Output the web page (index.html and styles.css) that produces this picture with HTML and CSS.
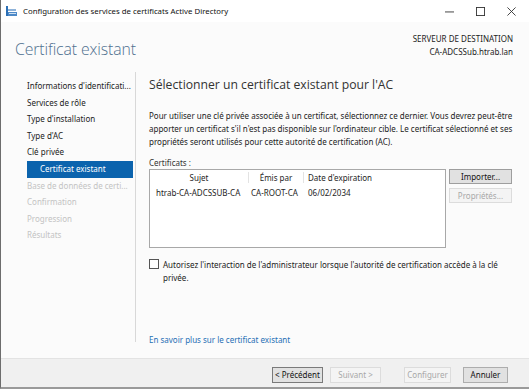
FILE: index.html
```html
<!DOCTYPE html>
<html lang="fr">
<head>
<meta charset="utf-8">
<link rel="stylesheet" href="styles.css">
</head>
<body>
<div class="window">
  <div class="titlebar">
    <svg class="appicon" width="11" height="11" viewBox="0 0 11 11">
      <rect x="0" y="0" width="2" height="10" fill="#2b6fb5"/>
      <rect x="2" y="3" width="8" height="2" fill="#8fb3d9"/>
      <rect x="2" y="6" width="9" height="4" fill="#4d89c7"/>
      <rect x="3" y="7" width="7" height="1" fill="#cfe0f2"/>
    </svg>
    <span class="title">Configuration des services de certificats Active Directory</span>
    <div class="controls">
      <svg width="10" height="10" viewBox="0 0 10 10"><line x1="0" y1="5.5" x2="10" y2="5.5" stroke="#333" stroke-width="1"/></svg>
      <svg width="10" height="10" viewBox="0 0 10 10"><rect x="0.5" y="0.5" width="9" height="9" fill="none" stroke="#333" stroke-width="1"/></svg>
      <svg width="10" height="10" viewBox="0 0 10 10"><path d="M0.5 0.5 L9.5 9.5 M9.5 0.5 L0.5 9.5" stroke="#333" stroke-width="1"/></svg>
    </div>
  </div>
  <div class="header">
    <h1 class="pagetitle">Certificat existant</h1>
    <div class="dest">
      <div>SERVEUR DE DESTINATION</div>
      <div>CA-ADCSSub.htrab.lan</div>
    </div>
  </div>
  <div class="main">
    <nav class="nav">
      <div class="navitem">Informations d'identificati...</div>
      <div class="navitem">Services de rôle</div>
      <div class="navitem">Type d'installation</div>
      <div class="navitem">Type d'AC</div>
      <div class="navitem">Clé privée</div>
      <div class="navitem selected">Certificat existant</div>
      <div class="navitem disabled">Base de données de certi...</div>
      <div class="navitem disabled">Confirmation</div>
      <div class="navitem disabled">Progression</div>
      <div class="navitem disabled">Résultats</div>
    </nav>
    <section class="content">
      <h2 class="heading">Sélectionner un certificat existant pour l'AC</h2>
      <p class="desc">Pour utiliser une clé privée associée à un certificat, sélectionnez ce dernier. Vous devrez peut-être apporter un certificat s'il n'est pas disponible sur l'ordinateur cible. Le certificat sélectionné et ses propriétés seront utilisés pour cette autorité de certification (AC).</p>
      <div class="label">Certificats :</div>
      <div class="certrow">
        <div class="list">
          <div class="lhead">
            <div class="col c1">Sujet</div>
            <div class="col c2">Émis par</div>
            <div class="col c3">Date d'expiration</div>
          </div>
          <div class="lrow">
            <div class="col c1 l">htrab-CA-ADCSSUB-CA</div>
            <div class="col c2 l">CA-ROOT-CA</div>
            <div class="col c3 l">06/02/2034</div>
          </div>
        </div>
        <div class="sidebtns">
          <div class="btn focus">Importer...</div>
          <div class="btn off">Propriétés...</div>
        </div>
      </div>
      <div class="check">
        <span class="box"></span>
        <span class="checktext">Autorisez l'interaction de l'administrateur lorsque l'autorité de certification accède à la clé privée.</span>
      </div>
      <div class="spacer"></div>
      <a class="link">En savoir plus sur le certificat existant</a>
    </section>
  </div>
  <div class="footer">
    <div class="btn wide prim">&lt; Précédent</div>
    <div class="btn wide off">Suivant &gt;</div>
    <div class="btn wide off gapl">Configurer</div>
    <div class="btn wide cancel">Annuler</div>
  </div>
</div>
</body>
</html>
```
FILE: styles.css
```css
* { box-sizing: border-box; margin: 0; padding: 0; }
html, body { width: 529px; height: 390px; overflow: hidden; background: #fff; }
body { font-family: "Noto Sans", "Open Sans", sans-serif; font-size: 8px; color: #1e1e1e; }
.window { width: 529px; height: 389px; display: flex; flex-direction: column; border-left: 1px solid #6d6d6d; border-bottom: 2px solid #9a9a9a; background: #fbfbfb; }
.titlebar { height: 22px; background: #fff; display: flex; align-items: center; padding-left: 5px; }
.appicon { flex: none; }
.title { margin-left: 6px; font-size: 7.8px; color: #111; }
.controls { margin-left: auto; display: flex; gap: 22px; padding-right: 13px; align-items: center; }
.controls svg { width: 9px; height: 9px; }
.header { height: 50px; display: flex; justify-content: space-between; align-items: flex-start; padding: 10px 16px 0 14px; }
.pagetitle { font-family: "Open Sans", sans-serif; font-weight: 300; font-size: 15.8px; color: #4f708f; margin-top: 6px; letter-spacing: -0.1px; }
.dest { text-align: right; font-size: 8px; line-height: 13px; color: #222; margin-top: 0px; }
.main { flex: 1; display: flex; }
.nav { width: 135px; border-right: 1px solid #d8d8d8; margin-bottom: 16px; padding: 6px 0 0 26px; display: flex; flex-direction: column; }
.navitem { height: 16.6px; line-height: 16.6px; font-size: 8px; color: #222; white-space: nowrap; }
.navitem.selected { background: #0b63ad; color: #fff; padding-left: 13px; margin-right: 2px; }
.navitem.disabled { color: #c3c3c3; }
.content { flex: 1; display: flex; flex-direction: column; padding: 4px 14px 0 13px; }
.heading { font-family: "Open Sans", sans-serif; font-weight: 400; font-size: 12.2px; color: #333; }
.desc { margin-top: 17px; line-height: 12.8px; font-size: 8px; color: #222; }
.label { margin-top: 9px; font-size: 8px; color: #333; }
.certrow { display: flex; gap: 4px; margin-top: 1px; }
.list { width: 297px; height: 79px; border: 1px solid #a8a8a8; background: #fff; }
.lhead, .lrow { display: flex; align-items: center; }
.lhead { height: 14px; }
.lrow { height: 15px; margin-top: 1px; }
.col { font-size: 8px; white-space: nowrap; }
.c1 { width: 99px; text-align: center; border-right: 1px solid #e3e3e3; }
.c2 { width: 55px; text-align: center; border-right: 1px solid #e3e3e3; }
.c3 { width: 80px; padding-left: 4px; }
.lrow .col { border-right: none; }
.lrow .c1 { text-align: left; padding-left: 6px; }
.lrow .c2 { text-align: left; padding-left: 2px; }
.sidebtns { display: flex; flex-direction: column; gap: 4px; margin-left: -1px; }
.btn { width: 63px; height: 15px; border: 1px solid #adadad; background: #e1e1e1; font-size: 8px; text-align: center; line-height: 13px; color: #111; }
.btn.focus { background: #e1e1e1; border-color: #9e9e9e; }
.btn.off { background: #f4f4f4; border-color: #dcdcdc; color: #a8a8a8; }
.check { display: flex; align-items: flex-start; margin-top: 10px; gap: 4px; }
.box { flex: none; width: 10px; height: 10px; border: 1px solid #555; background: #fff; margin-top: 1px; }
.checktext { line-height: 13px; width: 350px; color: #222; }
.spacer { flex: 1; }
.link { color: #1f6fb5; font-size: 8px; margin-bottom: 13px; }
.footer { height: 29px; border-top: 1px solid #e3e3e3; background: #f0f0f0; display: flex; justify-content: flex-end; align-items: flex-start; padding: 8px 21px 0 0; gap: 7px; }
.btn.wide { width: 51px; height: 16px; line-height: 14px; }
.btn.prim { border-color: #7a7a7a; }
.btn.gapl { margin-left: 16px; width: 47px; }
.btn.cancel { width: 45px; margin-left: 5px; }
```
